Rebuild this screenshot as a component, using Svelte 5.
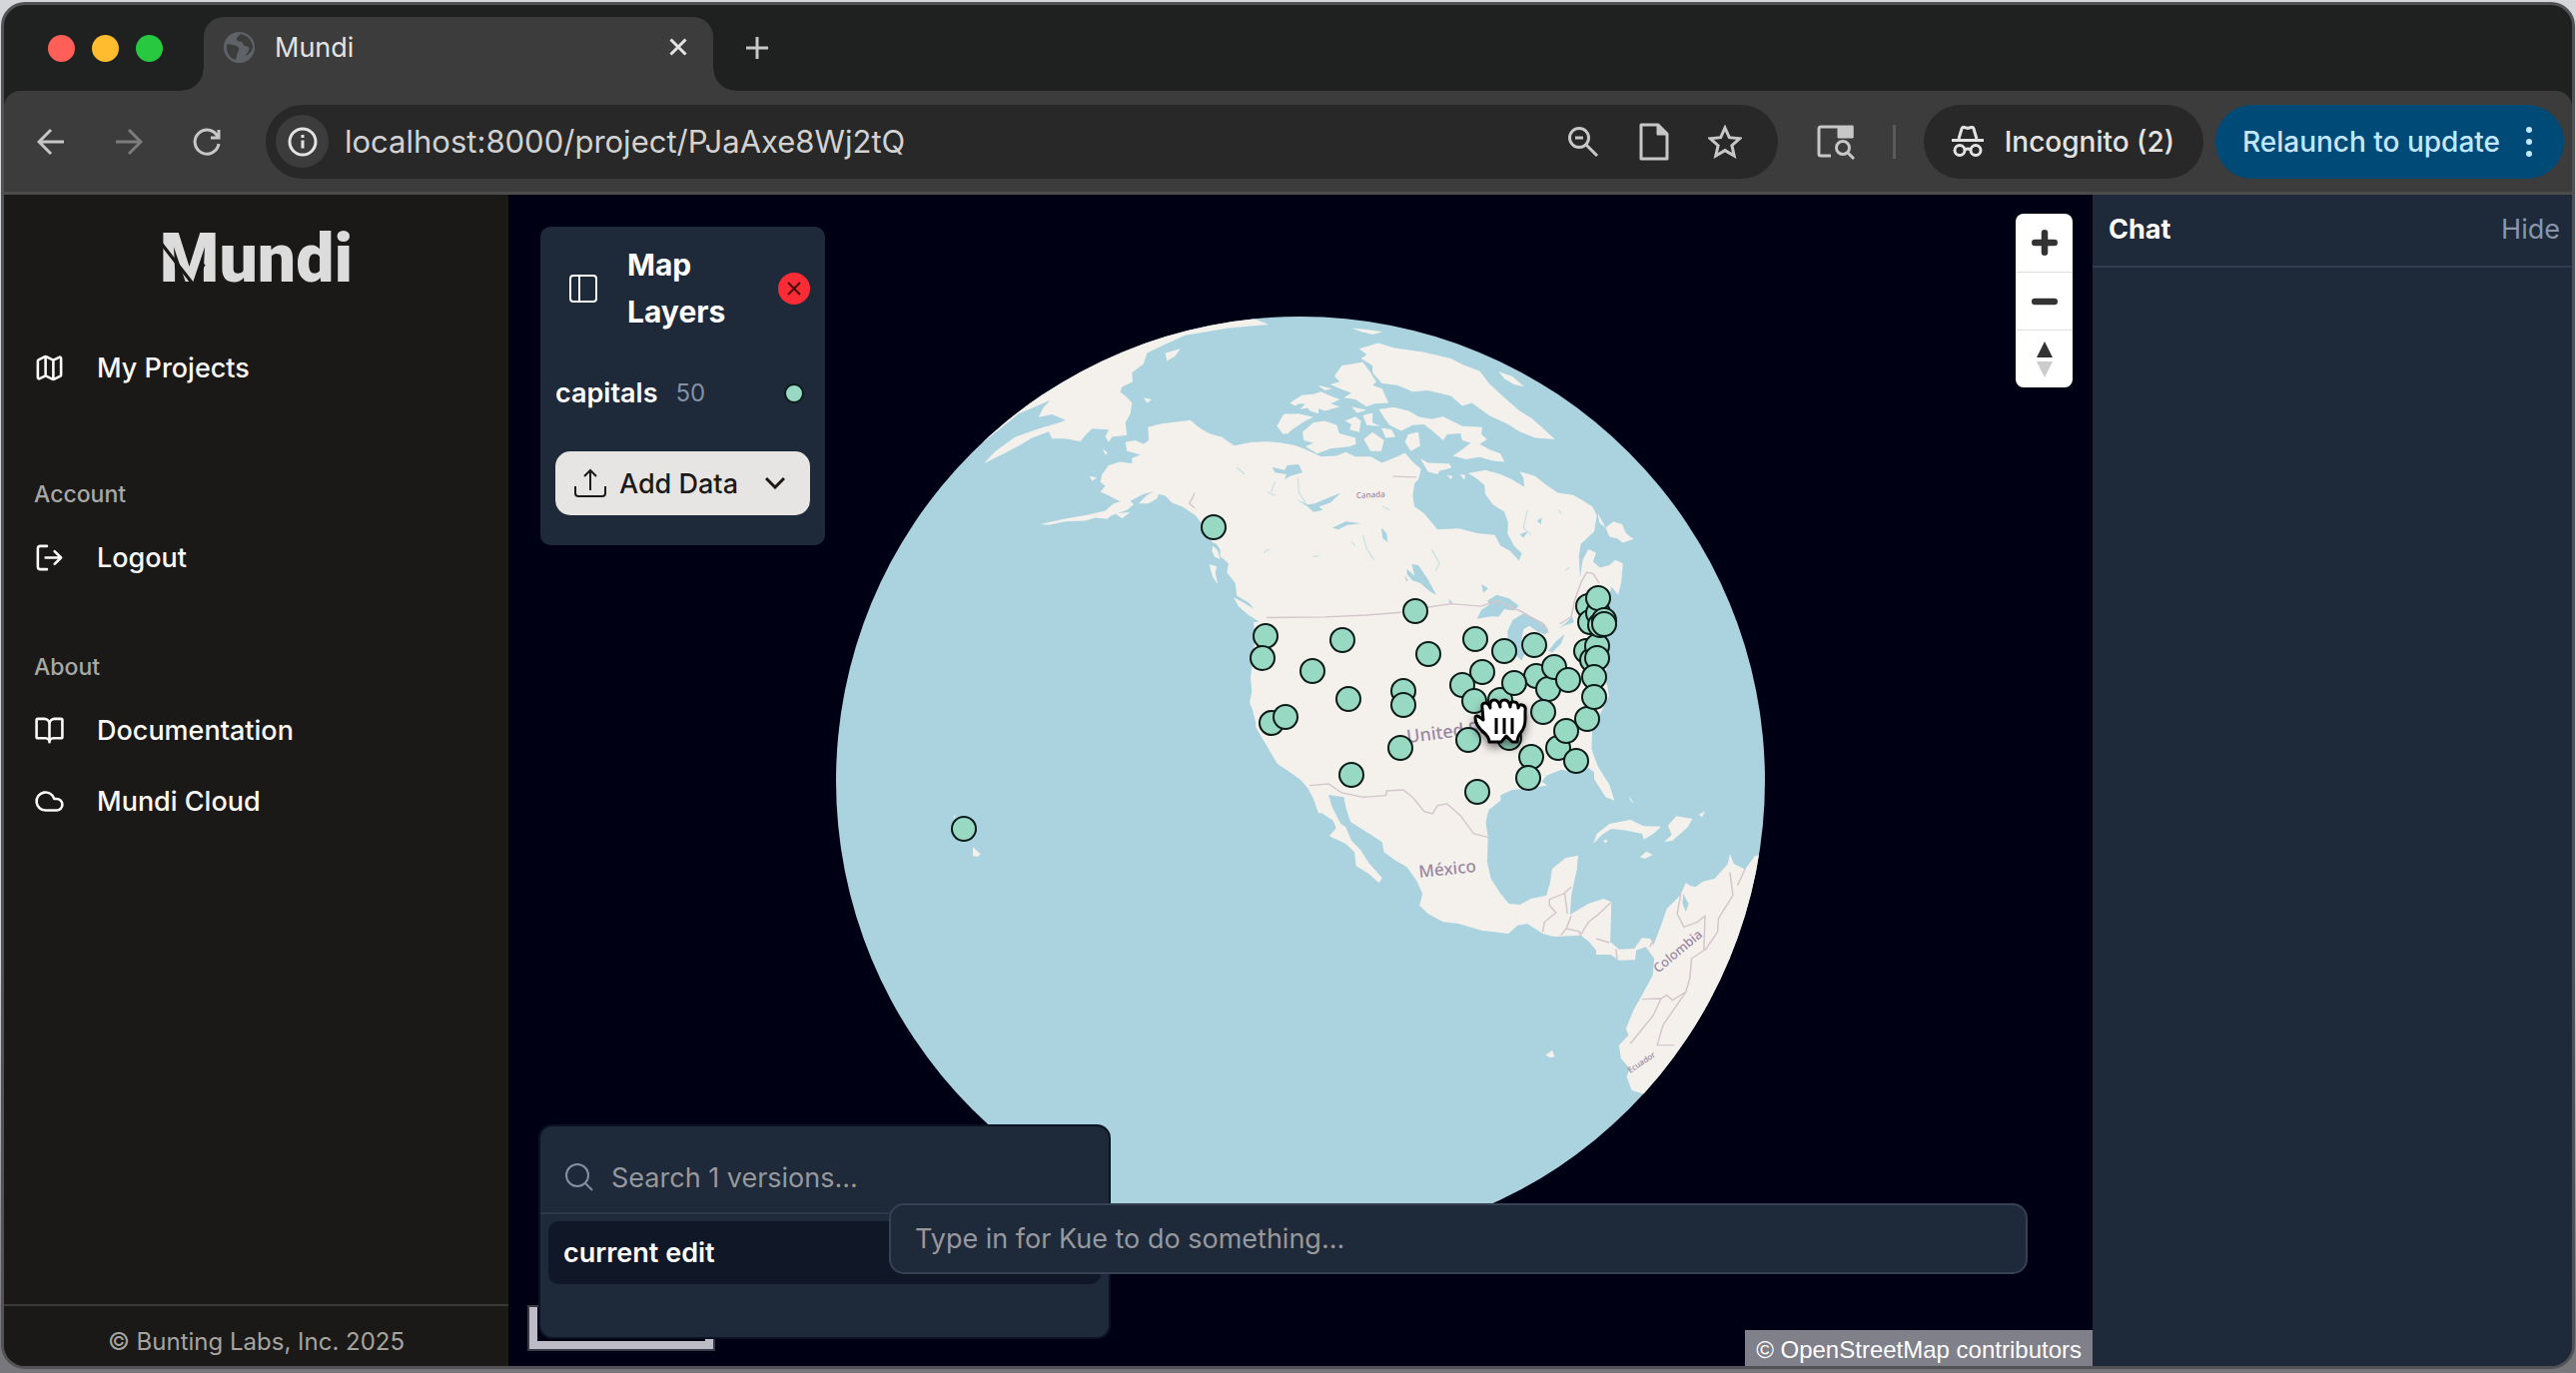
<script lang="ts">
	interface Marker {
		x: number;
		y: number;
	}

	const toMarker = ([x, y]: number[]): Marker => ({ x, y });

	// capitals layer, in globe viewBox units
	const capitals: Marker[] = [
		[1215, 528], [965, 830], [1267, 637], [1264, 659], [1344, 641],
		[1314, 672], [1350, 700], [1273, 724], [1287, 718], [1417, 612],
		[1430, 655], [1405, 692], [1405, 706], [1402, 749], [1353, 776],
		[1477, 640], [1506, 652], [1536, 646], [1484, 673], [1464, 686],
		[1476, 702], [1502, 701], [1538, 677], [1516, 684], [1550, 690],
		[1556, 668], [1570, 681], [1545, 713], [1470, 741], [1511, 739],
		[1533, 758], [1530, 779], [1479, 793], [1560, 749], [1568, 732],
		[1578, 762], [1589, 720], [1588, 652], [1594, 661], [1599, 647],
		[1599, 659], [1596, 678], [1596, 698], [1590, 607], [1592, 623],
		[1600, 614], [1600, 599], [1602, 626], [1606, 621], [1606, 625]
	].map(toMarker);

	interface NavItem {
		label: string;
		icon: 'map' | 'logout' | 'book' | 'cloud';
	}

	const mainNav: NavItem[] = [{ label: 'My Projects', icon: 'map' }];

	const navGroups: { title: string; items: NavItem[] }[] = [
		{ title: 'Account', items: [{ label: 'Logout', icon: 'logout' }] },
		{
			title: 'About',
			items: [
				{ label: 'Documentation', icon: 'book' },
				{ label: 'Mundi Cloud', icon: 'cloud' }
			]
		}
	];

	let url = $state('localhost:8000/project/PJaAxe8Wj2tQ');
	let versionQuery = $state('');
	let prompt = $state('');
</script>

{#snippet navLink(item: NavItem)}
	<a href="#{item.icon}" class="nav-link">
		<svg class="nav-icon" viewBox="0 0 24 24">
			{#if item.icon === 'map'}
				<path d="M14.1 5.55a2 2 0 0 0 1.8 0l3.65-1.83A1 1 0 0 1 21 4.62v12.76a1 1 0 0 1-.55.9l-4.56 2.27a2 2 0 0 1-1.78 0l-4.22-2.1a2 2 0 0 0-1.78 0l-3.66 1.83A1 1 0 0 1 3 19.38V6.62a1 1 0 0 1 .55-.9l4.56-2.27a2 2 0 0 1 1.78 0zM15 5.76v15M9 3.24v15" />
			{:else if item.icon === 'logout'}
				<path d="M10 3H5a2 2 0 0 0-2 2v14a2 2 0 0 0 2 2h5M16 17l5-5-5-5M21 12H9" />
			{:else if item.icon === 'book'}
				<path d="M12 7v14M3 18a1 1 0 0 1-1-1V4a1 1 0 0 1 1-1h5a4 4 0 0 1 4 4 4 4 0 0 1 4-4h5a1 1 0 0 1 1 1v13a1 1 0 0 1-1 1h-6a3 3 0 0 0-3 3 3 3 0 0 0-3-3z" />
			{:else}
				<path d="M17.5 19H9a7 7 0 1 1 6.7-9h1.8a4.5 4.5 0 1 1 0 9z" />
			{/if}
		</svg>
		{item.label}
	</a>
{/snippet}

<div class="desktop">
	<div class="window">
		<div class="tab-strip">
			<div class="traffic">
				<span class="light red"></span>
				<span class="light yellow"></span>
				<span class="light green"></span>
			</div>
			<div class="tab">
				<svg class="favicon" viewBox="0 0 32 32">
					<circle cx="16" cy="16" r="16" fill="#5f6368" />
					<path d="M3 13c4-1 6 1 9 1 3 1 5 3 3 6-2 2-1 5-3 9-6-2-10-8-9-16zM17 2c-2 3-5 4-3 7 3 2 5 0 6 3 0 3 4 2 6 4 1 3-2 6-4 9 5-2 8-6 8-10C29 8 24 3 17 2z" fill="#3c3c3c" />
				</svg>
				<span class="tab-title">Mundi</span>
				<button class="icon-button close-tab" aria-label="Close tab">
					<svg width="18" height="18" viewBox="0 0 18 18"><path d="M1.500 1.500l15 15M16.500 1.500l-15 15" stroke-width="3" /></svg>
				</button>
			</div>
			<button class="icon-button new-tab" aria-label="New tab">
				<svg width="24" height="24" viewBox="0 0 24 24"><path d="M12 1v22M1 12h22" stroke-width="3" /></svg>
			</button>
		</div>

		<div class="toolbar">
			<button class="icon-button tool" aria-label="Back">
				<svg width="28" height="28" viewBox="0 0 28 28"><path d="M27 14H3M14 2L2 14l12 12" stroke-width="3" /></svg>
			</button>
			<button class="icon-button tool dim" aria-label="Forward">
				<svg width="28" height="28" viewBox="0 0 28 28"><path d="M1 14h24M14 2l12 12-12 12" stroke-width="3" /></svg>
			</button>
			<button class="icon-button tool" aria-label="Reload">
				<svg width="28" height="28" viewBox="0 0 28 28"><path d="M25 9A12 12 0 1 0 26 16M26 2v8h-8" stroke-width="3" /></svg>
			</button>

			<div class="address">
				<button class="icon-button site-info" aria-label="View site information">
					<svg width="30" height="30" viewBox="0 0 30 30">
						<circle cx="15" cy="15" r="13" stroke-width="3" />
						<path d="M15 13.500v8M15 8v3" stroke-width="3" />
					</svg>
				</button>
				<input class="url" aria-label="Address" bind:value={url} />
				<button class="icon-button address-tool" aria-label="Zoom">
					<svg width="32" height="32" viewBox="0 0 32 32"><circle cx="12" cy="12" r="9.500" stroke-width="3" /><path d="M19 19l11 11M8 12h8" stroke-width="3" /></svg>
				</button>
				<button class="icon-button address-tool" aria-label="Page">
					<svg width="32" height="38" viewBox="0 0 32 38"><path d="M3 2h17l9 9v25H3z" stroke-width="3" stroke-linejoin="round" /><path d="M19 2v10h10z" fill="#c7c7c7" /></svg>
				</button>
				<button class="icon-button address-tool" aria-label="Bookmark this tab">
					<svg width="34" height="34" viewBox="0 0 34 34"><path d="M17 3l4.300 9.700 10.500 1-7.900 7 2.300 10.300L17 25.600 7.800 31l2.300-10.300-7.900-7 10.500-1z" stroke-width="3" /></svg>
				</button>
			</div>

			<button class="icon-button tool lens" aria-label="Search tabs">
				<svg width="40" height="36" viewBox="0 0 40 36">
					<path d="M15 32H5q-2 0-2-2V5q0-2 2-2h31v11" stroke-width="3" />
					<path d="M22 3h15v11H22z" fill="#c7c7c7" />
					<circle cx="27" cy="24" r="6.500" stroke-width="3" />
					<path d="M31 28l7 7" stroke-width="3" />
				</svg>
			</button>
			<span class="divider"></span>
			<button class="pill incognito">
				<svg width="34" height="32" viewBox="0 0 34 32">
					<path d="M8 13L11 3q.500-2 2.500-1.500L17 2.500l3.500-1Q22.500 1 23 3l3 10" stroke-width="3" />
					<path d="M1 14.500h32" stroke-width="3" />
					<circle cx="9" cy="24.500" r="5" stroke-width="3" />
					<circle cx="25" cy="24.500" r="5" stroke-width="3" />
					<path d="M14 24q3-2 6 0" stroke-width="3" />
				</svg>
				Incognito (2)
			</button>
			<button class="pill update">
				Relaunch to update
				<svg width="6" height="32" viewBox="0 0 6 32"><g fill="#c2e7ff" stroke="none"><circle cx="3" cy="4" r="3" /><circle cx="3" cy="16" r="3" /><circle cx="3" cy="28" r="3" /></g></svg>
			</button>
		</div>

		<div class="app">
			<aside class="sidebar">
				<div class="logo">
					Mundi
					<svg class="logo-cut" viewBox="0 0 50 46"><path d="M-1 5L31 46M35 37L41 27" /></svg>
				</div>
				<nav class="nav">
					{#each mainNav as item}
						{@render navLink(item)}
					{/each}
				</nav>
				{#each navGroups as group}
					<nav class="nav nav-group">
						<h3 class="nav-title">{group.title}</h3>
						{#each group.items as item}
							{@render navLink(item)}
						{/each}
					</nav>
				{/each}
				<footer class="copyright">© Bunting Labs, Inc. 2025</footer>
			</aside>

			<main class="map">
				<svg class="globe" viewBox="509 195 1586 1173">
					<defs>
						<clipPath id="sphere"><circle cx="1302" cy="782" r="465" /></clipPath>
					</defs>
					<circle cx="1302" cy="782" r="465" fill="#aad3df" />
					<g clip-path="url(#sphere)">
						<!-- Siberia, Alaska and the Pacific coast -->
						<g transform="translate(820 300) scale(.33333 .35714)">
							<g class="land">
								<path d="M440 430L600 230L700 180L1000 60L1270 40L1350 70L1230 80L1100 100L1040 125L985 150L975 180L940 205L942 230L910 245L905 260L920 270L940 290L935 320L920 345L925 380L880 385L870 400L860 385L870 365L820 362L800 380L785 398L740 390L700 390L690 370L640 388L600 410L560 430L495 460L530 425L590 385L660 362L722 345L740 338L700 322L660 330L672 305L695 282L600 320L500 395Z" />
								<path d="M1500 1440L1485 1400L1468 1370L1440 1340L1415 1322L1380 1305L1370 1280L1345 1250L1345 1235L1325 1200L1310 1180L1302 1150L1293 1130L1300 1100L1296 1060L1305 1000L1310 940L1305 905L1350 900L1330 875L1290 850L1255 830L1250 795L1225 765L1230 740L1205 720L1205 690L1180 680L1165 650L1155 635L1130 605L1090 580L1060 570L1040 550L1020 545L1015 558L990 572L960 572L985 548L1005 538L975 545L935 565L945 575L925 590L880 605L865 615L830 612L800 620L740 622L690 632L665 630L735 615L800 605L860 592L885 572L905 566L860 545L845 540L860 522L845 512L850 490L870 465L905 455L940 460L940 445L965 435L925 425L920 400L950 395L975 405L990 395L988 358L1030 348L1115 338L1140 358L1175 378L1210 385L1245 410L1300 400L1350 402L1400 405L1440 420L1480 440L1520 460V1440Z" />
								<path d="M1245 835L1275 850L1310 870L1350 905L1325 905L1290 885L1260 860ZM1172 742L1195 748L1190 765L1198 798L1182 778ZM1183 690L1198 705L1205 728L1188 722L1180 705ZM1040 150L1085 138L1070 158L1045 172ZM975 276L1000 280L985 290ZM852 418L866 430L860 436ZM812 495L835 500L820 508ZM890 600L935 596L910 614ZM1415 290L1440 275L1460 280L1430 298ZM1455 290L1500 300V320L1475 312ZM1380 355L1400 320L1440 325L1460 340L1420 365L1405 378ZM405 1442L410 1458L404 1452ZM462 1535L485 1555L478 1562L462 1560Z" />
							</g>
							<path class="border" d="M1215 390L1112 572L1130 585L1145 615M1210 672L1222 690L1242 705L1238 725L1228 730" />
						</g>

						<!-- Canada, the Arctic and the United States -->
						<g transform="translate(1200 300) scale(.38265 .35714)">
							<g class="land">
								<path d="M-10 360L60 388L95 410L150 400L180 398L215 402L250 408L280 420L320 440L360 438L385 428L410 440L450 440L480 458L520 440L540 430L560 455L582 475L575 505L565 515L560 550L565 580L590 600L610 625L625 645L680 642L730 655L775 660L790 690L815 705L838 732L846 712L825 690L808 655L810 625L800 595L770 575L750 545L748 520L725 500L705 487L750 478L790 490L820 505L852 525L850 500L840 482L880 495L910 520L940 542L980 548L1000 560L1030 580L1042 605L1035 650L1000 685L995 720L998 780L1005 730L1020 700L1040 710L1032 735L1050 752L1075 745L1090 730L1110 740L1106 790L1098 828L1080 805L1070 860L1088 895L1060 930L1060 960L1070 1000L1065 1060L1074 1110L1052 1160L1030 1200L1028 1260L1045 1310L1075 1360L1088 1405L1065 1395L1035 1345L1035 1325L1015 1310L990 1328L950 1318L910 1335L898 1352L912 1362L870 1370L820 1375L790 1390L790 1405L760 1430L750 1460L757 1505H500L420 1400L300 1365L285 1360L205 1300L150 1200L140 1000L170 905L105 810L80 740L20 640L-10 600Z" />
								<path d="M420 138L470 122L510 135L590 148L660 165L690 182L735 200L760 235L800 275L840 312L870 332L895 355L932 392L880 388L840 370L810 350L760 325L715 290L690 298L660 270L600 255L560 258L520 240L480 235L455 205L455 185L425 165L440 155Z" />
								<path d="M355 215L375 185L430 176L450 205L465 230L455 240L480 250L497 290L460 292L440 300L410 280L380 275L400 262L370 250L345 238L370 230ZM238 292L270 268L300 265L320 258L350 272L370 280L345 292L370 300L330 312L300 300L265 308L280 292ZM312 240L350 250L330 255ZM400 300L440 310L415 318ZM205 355L222 322L262 320L300 330L270 345L240 368L222 378ZM272 372L300 345L330 340L362 352L368 375L410 388L412 405L395 412L345 418L310 432L280 412L300 402L275 395ZM383 340L410 328L425 340L420 372L395 365L400 350ZM430 325L455 318L455 345L475 355L440 352ZM432 392L455 372L485 395L478 425L450 425ZM478 360L505 365L515 385L490 388ZM548 378L575 372L580 410L555 425L540 400Z" />
								<path d="M472 308L510 302L550 312L575 328L610 335L640 328L690 355L742 358L740 378L755 392L735 405L760 420L790 432L800 455L770 452L735 442L700 448L665 438L690 420L712 402L690 395L685 375L650 378L640 395L612 368L590 350L560 352L530 368L500 352L488 335ZM580 445L600 458L655 460L662 472L630 480L625 490L600 482ZM650 492L665 495L660 505ZM684 490L698 492L695 506ZM1065 640L1085 622L1108 630L1118 655L1138 672L1110 682L1095 670L1075 665ZM785 202L820 215L852 244L825 238L800 222ZM400 80L440 84L482 90L455 98L425 90ZM1045 600L1065 640L1048 625Z" />
							</g>
							<g class="lake">
								<path d="M728 895L740 870L762 855L755 845L780 828L812 838L838 858L825 872L800 868L785 890L765 888ZM810 960L808 930L822 898L850 880L862 885L900 905L915 925L908 940L885 930L865 915L850 925L845 955L855 990L845 1012L828 995ZM915 985L935 958L958 938L948 965L925 990ZM942 922L960 908L978 890L982 905L955 915ZM545 755L565 775L558 742L575 745L600 785L622 828L605 818L580 795L560 788L545 770ZM192 470L225 478L232 465L262 462L272 485L240 495L225 505L230 490L200 485ZM255 560L285 575L305 572L330 560L372 542L345 570L315 580L325 590L300 596L285 580ZM350 640L385 622L425 628L390 632L365 645ZM478 640L492 655L495 680L482 670ZM740 798L758 810L745 822ZM840 658L862 650L850 668ZM885 620L898 612L895 630ZM540 770L548 790L542 788ZM655 840L666 852L655 850ZM1035 660L1060 700L1095 715L1085 735L1052 742L1040 700L1030 690Z" />
								<path class="stream" d="M260 500L262 540L280 570M200 510L190 540M430 660L440 700L460 730M300 720h15M610 700L630 740L620 760M960 760L970 750M860 590L850 640L870 660M940 590L950 600M100 470L120 490M180 540L200 550M170 710L185 700M480 580L500 590M400 680L410 690" />
							</g>
							<path class="border" d="M178 892L330 890L440 885L530 877M598 863L660 853L740 860L780 845L845 875L905 912L915 935M945 910L975 890L985 840L1000 795M508 496L570 498M1000 795L1015 765L1032 768L1048 795" />
						</g>

						<!-- Mexico, the Caribbean and South America -->
						<g transform="translate(1200 780) scale(.38265 .33333)">
							<g class="land">
								<path d="M270 -20L300 50L325 105L352 125L360 148L342 172L385 195L408 220L412 262L445 285L472 313L480 298L445 252L425 215L400 185L385 145L372 135L365 120L348 80L340 48L380 55L386 90L398 130L440 160L480 190L485 220L515 245L545 265L570 305L586 345L578 380L600 405L640 430L680 435L740 455L810 465L835 440L860 435L900 465L930 474L1000 470L1022 490L1040 515L1040 528L1078 528L1100 545L1142 544L1145 515L1170 505L1192 540L1188 590L1160 650L1140 690L1118 750L1125 770L1100 800L1105 840L1128 870L1120 895L1133 935L1200 960L1600 600V200L1455 232L1430 272L1412 262L1400 255L1390 225L1385 255L1350 300L1320 308L1300 325L1285 320L1275 312L1260 350L1225 390L1210 440L1190 500L1182 480L1160 478L1140 510L1100 512L1077 490L1080 370L1060 360L1020 375L972 408L975 350L990 270L993 230L960 238L925 270L920 310L910 350L870 360L840 378L812 375L790 345L765 300L755 250L757 180L750 140L760 80L790 45L830 -20Z" />
								<path d="M1033 195L1042 165L1075 135L1130 123L1165 142L1210 143L1190 165L1165 182L1160 165L1120 155L1080 150L1055 168ZM1228 140L1250 112L1292 120L1280 145L1255 170L1240 185L1218 190L1238 168ZM1155 235L1172 218L1188 228L1168 240ZM1308 108L1325 96L1318 114ZM1058 185L1070 182L1066 194ZM1125 50L1140 75L1130 65ZM908 830L925 815L932 835L920 838Z" />
							</g>
							<path class="lake" d="M1268 345L1282 375L1275 400L1266 375Z" />
							<path class="border" d="M290 20L340 15L375 42L430 55L490 50L492 36L535 33L560 55L590 98L612 105L625 80L650 75L685 110L720 165L757 175M975 325L955 345L918 362L918 380L935 402L905 430L900 460M958 345L965 405M975 412L962 450L948 470M962 450L995 458L1000 468L1020 430L1045 408L1078 372M1040 480L1075 492M1092 512L1095 540M1180 505L1190 485M1262 345L1252 405L1270 445L1305 430L1325 412L1322 515L1290 540L1285 600L1275 640L1240 665L1225 650L1210 660L1160 662M1210 660L1190 710L1130 795M1275 640L1215 740L1200 800L1245 800M1390 280L1398 350L1360 420L1358 460L1325 515M1430 270L1410 320" />
						</g>

						<g class="labels">
							<text x="1409" y="744" font-size="18" transform="rotate(-7 1409 744)">United States</text>
							<text x="1421" y="879" font-size="17" transform="rotate(-6 1421 879)">México</text>
							<text x="1358" y="499" font-size="8" transform="rotate(-3 1358 499)">Canada</text>
							<text x="1660" y="975" font-size="13" transform="rotate(-40 1660 975)">Colombia</text>
							<text x="1632" y="1075" font-size="8" transform="rotate(-34 1632 1075)">Ecuador</text>
						</g>
					</g>

					{#each capitals as marker}
						<circle class="marker" cx={marker.x} cy={marker.y} r="12" />
					{/each}

					<!-- grabbing hand -->
					<g class="hand" transform="translate(1475 699)">
						<path d="M10 22L9 10Q8 5 12 5q3 0 5 5Q16 2 21 2q4 0 6 7Q26 2 31 2t6 7q0-6 4-5 4 0 4 6 1-4 4-3 4 1 3 6v8q0 8-4 13-4 5-4 10h-5l-6-6-5 6H16q0-5-6-10Q2 27 2 20q0-5 8 2z" />
						<path class="lines" d="M23 20v16M31 20v16M39 20v16" />
					</g>
				</svg>

				<section class="layers">
					<header class="layers-header">
						<button class="icon-button panel-toggle" aria-label="Toggle panel">
							<svg width="28" height="28" viewBox="0 0 28 28"><rect x="1" y="1" width="26" height="26" rx="3" /><path d="M10 1v26" /></svg>
						</button>
						<h2 class="layers-title">Map Layers</h2>
						<button class="icon-button panel-close" aria-label="Close">
							<svg width="14" height="14" viewBox="0 0 14 14"><path d="M1 1l12 12M13 1L1 13" stroke-width="2" /></svg>
						</button>
					</header>
					<div class="layer">
						<span class="layer-name">capitals</span>
						<span class="layer-count">50</span>
						<span class="layer-dot"></span>
					</div>
					<button class="add-data">
						<svg width="32" height="30" viewBox="0 0 32 30"><path d="M1 18v7q0 3 3 3h24q3 0 3-3v-7M16 22V2M10 8l6-6 6 6" /></svg>
						Add Data
						<svg class="chevron" width="20" height="12" viewBox="0 0 20 12"><path d="M1 1l9 9 9-9" stroke-width="3" /></svg>
					</button>
				</section>

				<div class="zoom-control">
					<button aria-label="Zoom in"><svg viewBox="0 0 24 24"><path d="M12 3v18M3 12h18" /></svg></button>
					<button aria-label="Zoom out"><svg viewBox="0 0 24 24"><path d="M3 12h18" /></svg></button>
					<button aria-label="Reset bearing to north">
						<svg class="compass" viewBox="0 0 16 36"><path d="M8 0l8 16H0z" fill="#333" /><path d="M8 36l8-16H0z" fill="#ccc" /></svg>
					</button>
				</div>

				<div class="scale-bar"></div>

				<section class="versions">
					<label class="version-search">
						<svg width="28" height="28" viewBox="0 0 28 28"><circle cx="12" cy="12" r="11" /><path d="M20 20l7 7" /></svg>
						<input bind:value={versionQuery} placeholder="Search 1 versions..." aria-label="Search versions" />
					</label>
					<div class="version-list">
						<button class="version">current edit</button>
					</div>
				</section>

				<input class="prompt" bind:value={prompt} placeholder="Type in for Kue to do something..." aria-label="Message Kue" />

				<a href="#osm" class="attribution">© OpenStreetMap contributors</a>
			</main>

			<aside class="chat">
				<header class="chat-header">
					<h2 class="chat-title">Chat</h2>
					<button class="hide">Hide</button>
				</header>
			</aside>
		</div>
	</div>
</div>

<style>
	:global(body) {
		margin: 0;
		background: #d4d6d9;
	}

	.desktop {
		--ui: Inter, Roboto, 'Liberation Sans', sans-serif;
		--panel: #1e2939;
		min-height: 100vh;
		box-sizing: border-box;
		padding: 2px 1px 4px;
		display: flex;
		background: linear-gradient(#d4d6d9 70%, #78787c 97%);
		font-family: var(--ui);
		font-size: 27px;
		color: #fff;
	}

	.window {
		flex: 1;
		min-width: 0;
		display: flex;
		flex-direction: column;
		overflow: hidden;
		border: 3px solid #505253;
		border-radius: 24px;
		background: #1f2120;
	}

	button,
	input {
		font: inherit;
		color: inherit;
		background: none;
		border: 0;
		padding: 0;
		margin: 0;
		outline: none;
		box-sizing: border-box;
	}

	h2,
	h3 {
		margin: 0;
	}

	svg {
		fill: none;
		stroke: currentColor;
		flex: none;
	}

	.icon-button {
		display: flex;
		align-items: center;
		justify-content: center;
		flex: none;
	}

	/* browser chrome */
	.tab-strip {
		display: flex;
		height: 86px;
		flex: none;
		padding-left: 44px;
	}

	.traffic {
		display: flex;
		align-items: center;
		gap: 17px;
		width: 156px;
	}

	.light {
		width: 27px;
		height: 27px;
		border-radius: 50%;
	}

	.red {
		background: #ff5f57;
	}

	.yellow {
		background: #febc2e;
	}

	.green {
		background: #28c840;
	}

	.tab {
		position: relative;
		display: flex;
		align-items: center;
		box-sizing: border-box;
		width: 510px;
		margin-top: 12px;
		padding: 0 26px 14px 20px;
		border-radius: 20px 20px 0 0;
		background: #3c3c3c;
	}

	.tab::before,
	.tab::after {
		content: '';
		position: absolute;
		bottom: 0;
		width: 22px;
		height: 22px;
	}

	.tab::before {
		left: -22px;
		background: radial-gradient(circle at 0 0, transparent 21px, #3c3c3c 22px);
	}

	.tab::after {
		right: -22px;
		background: radial-gradient(circle at 100% 0, transparent 21px, #3c3c3c 22px);
	}

	.favicon {
		width: 31px;
		height: 31px;
		stroke: none;
	}

	.tab-title {
		flex: 1;
		margin-left: 20px;
		color: #e3e3e3;
	}

	.close-tab {
		color: #e3e3e3;
	}

	.new-tab {
		width: 88px;
		color: #c7c7c7;
	}

	.toolbar {
		display: flex;
		align-items: center;
		flex: none;
		height: 104px;
		box-sizing: border-box;
		padding: 0 8px;
		border-bottom: 3px solid #4c4c4c;
		border-radius: 16px 16px 0 0;
		background: #3c3c3c;
	}

	.tool {
		width: 78px;
		height: 74px;
		color: #c7c7c7;
	}

	.dim {
		color: #7c7c7c;
	}

	.address {
		flex: 1;
		min-width: 0;
		display: flex;
		align-items: center;
		height: 74px;
		margin: 0 19px 0 20px;
		padding: 0 17px 0 10px;
		box-sizing: border-box;
		border-radius: 37px;
		background: #282828;
	}

	.site-info {
		width: 53px;
		height: 53px;
		border-radius: 50%;
		background: #3c3c3c;
		color: #e3e3e3;
	}

	.url {
		flex: 1;
		min-width: 0;
		margin-left: 16px;
		font-size: 31px;
		color: #d2d2d2;
	}

	.address-tool {
		width: 71px;
		height: 53px;
		color: #c7c7c7;
	}

	.divider {
		width: 3px;
		height: 34px;
		margin: 0 28px 0 18px;
		background: #5a5a5a;
	}

	.pill {
		display: flex;
		align-items: center;
		height: 74px;
		border-radius: 37px;
		white-space: nowrap;
		font-size: 28px;
		font-weight: 500;
	}

	.incognito {
		gap: 20px;
		padding: 0 29px 0 27px;
		margin-right: 12px;
		background: #282828;
		color: #e3e3e3;
	}

	.update {
		gap: 26px;
		padding: 0 32px 0 27px;
		background: #004a77;
		color: #c2e7ff;
	}

	.app {
		flex: 1;
		display: grid;
		grid-template-columns: 505px 1fr 480px;
	}

	/* sidebar */
	.sidebar {
		display: flex;
		flex-direction: column;
		background: #1a1917;
	}

	.logo {
		position: relative;
		align-self: center;
		margin: 26px 0 36px;
		font-family: Roboto, Inter, sans-serif;
		font-size: 68px;
		line-height: 76px;
		font-weight: 900;
		color: #dcdcdc;
	}

	.logo-cut {
		position: absolute;
		left: 0;
		top: 14px;
		width: 54px;
		height: 50px;
		stroke: #1a1917;
		stroke-width: 3;
	}

	.nav {
		padding: 0 30px 40px;
	}

	.nav-group {
		padding: 23px 30px;
	}

	.nav-title {
		font-size: 23px;
		line-height: 56px;
		font-weight: 500;
		color: #a8a8a6;
	}

	.nav-link {
		display: flex;
		align-items: center;
		gap: 32px;
		height: 71px;
		color: #fafaf9;
		font-weight: 500;
		text-decoration: none;
	}

	.nav-icon {
		width: 31px;
		height: 31px;
		stroke-width: 2;
		stroke-linecap: round;
		stroke-linejoin: round;
	}

	.copyright {
		margin-top: auto;
		padding: 20px 0 8px;
		border-top: 2px solid #3a3a38;
		text-align: center;
		font-size: 24px;
		line-height: 32px;
		color: #a6a4a0;
	}

	/* map */
	.map {
		position: relative;
		overflow: hidden;
		background: #000014;
	}

	.globe {
		position: absolute;
		inset: 0;
		width: 100%;
		height: 100%;
		stroke: none;
	}

	.land {
		fill: #f4f1ec;
	}

	.lake {
		fill: #aad3df;
	}

	.stream {
		fill: none;
		stroke: #c5dfe3;
		stroke-width: 3;
	}

	.border {
		fill: none;
		stroke: #d3c6cc;
		stroke-width: 4;
	}

	.labels {
		font-family: 'Noto Sans', sans-serif;
		font-weight: 500;
		fill: #9c88a4;
	}

	.marker {
		fill: #98d9c4;
		stroke: #0b1a17;
		stroke-width: 2;
	}

	.hand {
		fill: #fff;
		stroke: #000;
		stroke-width: 3;
		stroke-linejoin: round;
		filter: drop-shadow(0 4px 4px rgba(0, 0, 0, 0.5));
	}

	.lines {
		stroke-width: 3;
	}

	.layers {
		position: absolute;
		top: 32px;
		left: 32px;
		width: 285px;
		box-sizing: border-box;
		padding: 15px 15px 30px;
		border-radius: 10px;
		background: var(--panel);
	}

	.layers-header {
		display: flex;
		align-items: center;
		padding-left: 14px;
	}

	.layers-title {
		flex: 1;
		margin-left: 30px;
		font-size: 30px;
		line-height: 47px;
		font-weight: 700;
	}

	.panel-toggle {
		stroke-width: 2;
	}

	.panel-close {
		width: 32px;
		height: 32px;
		border-radius: 50%;
		background: #fb2c36;
		color: #460809;
	}

	.layer {
		display: flex;
		align-items: center;
		margin: 36px 6px 37px 0;
		line-height: 43px;
		font-weight: 600;
	}

	.layer-count {
		margin-left: 18px;
		font-size: 24px;
		font-weight: 400;
		color: #8490a3;
	}

	.layer-dot {
		width: 16px;
		height: 16px;
		margin-left: auto;
		border: 2px solid #0b1a17;
		border-radius: 50%;
		background: #98d9c4;
	}

	.add-data {
		display: flex;
		align-items: center;
		gap: 13px;
		width: 100%;
		height: 64px;
		padding: 0 25px 0 19px;
		border-radius: 15px;
		background: #e7e5e4;
		color: #1c1917;
		font-weight: 500;
	}

	.add-data svg {
		stroke-width: 2;
	}

	.add-data .chevron {
		margin-left: auto;
	}

	.zoom-control {
		position: absolute;
		top: 19px;
		right: 20px;
		display: flex;
		flex-direction: column;
		border-radius: 8px;
		overflow: hidden;
		background: #fff;
	}

	.zoom-control button {
		display: flex;
		align-items: center;
		justify-content: center;
		width: 57px;
		height: 58px;
		color: #333;
	}

	.zoom-control button + button {
		border-top: 1px solid #ddd;
	}

	.zoom-control svg {
		width: 26px;
		height: 26px;
		stroke-width: 6;
		stroke-linecap: round;
	}

	.zoom-control .compass {
		width: 16px;
		height: 36px;
		stroke: none;
	}

	.scale-bar {
		position: absolute;
		left: 21px;
		bottom: 17px;
		width: 184px;
		height: 42px;
		box-sizing: border-box;
		border: 8px solid #bdbcc6;
		border-top: 0;
		outline: 2px solid #3b3b47;
		background: #000014;
	}

	.versions {
		position: absolute;
		left: 32px;
		bottom: 29px;
		width: 569px;
		border-radius: 12px;
		background: var(--panel);
		box-shadow: 0 0 0 2px #0b1322;
	}

	.version-search {
		display: flex;
		align-items: center;
		gap: 18px;
		height: 88px;
		padding: 16px 25px 0;
		box-sizing: border-box;
		border-bottom: 2px solid #2c3748;
		color: #8490a3;
	}

	.version-search svg {
		stroke-width: 2;
	}

	.version-search input {
		flex: 1;
		min-width: 0;
	}

	::placeholder {
		color: #97989c;
		opacity: 1;
	}

	.version-list {
		padding: 7px 8px 53px;
	}

	.version {
		display: block;
		width: 100%;
		height: 63px;
		padding-left: 15px;
		border-radius: 10px;
		background: #101827;
		text-align: left;
		font-weight: 600;
	}

	.prompt {
		position: absolute;
		left: 381px;
		right: 65px;
		bottom: 92px;
		height: 71px;
		padding: 0 24px;
		border: 2px solid #364153;
		border-radius: 15px;
		background: var(--panel);
	}

	.attribution {
		position: absolute;
		right: 0;
		bottom: 0;
		padding: 3px 11px 0;
		background: #80808a;
		color: #fff;
		font-family: 'Liberation Sans', Arial, sans-serif;
		font-size: 24px;
		line-height: 33px;
		text-decoration: none;
	}

	/* chat */
	.chat {
		background: var(--panel);
	}

	.chat-header {
		display: flex;
		align-items: center;
		justify-content: space-between;
		height: 73px;
		box-sizing: border-box;
		padding: 0 12px 2px 16px;
		border-bottom: 2px solid #303c4d;
	}

	.chat-title {
		font-size: 27px;
		font-weight: 700;
	}

	.hide {
		color: #8c96a8;
	}
</style>
